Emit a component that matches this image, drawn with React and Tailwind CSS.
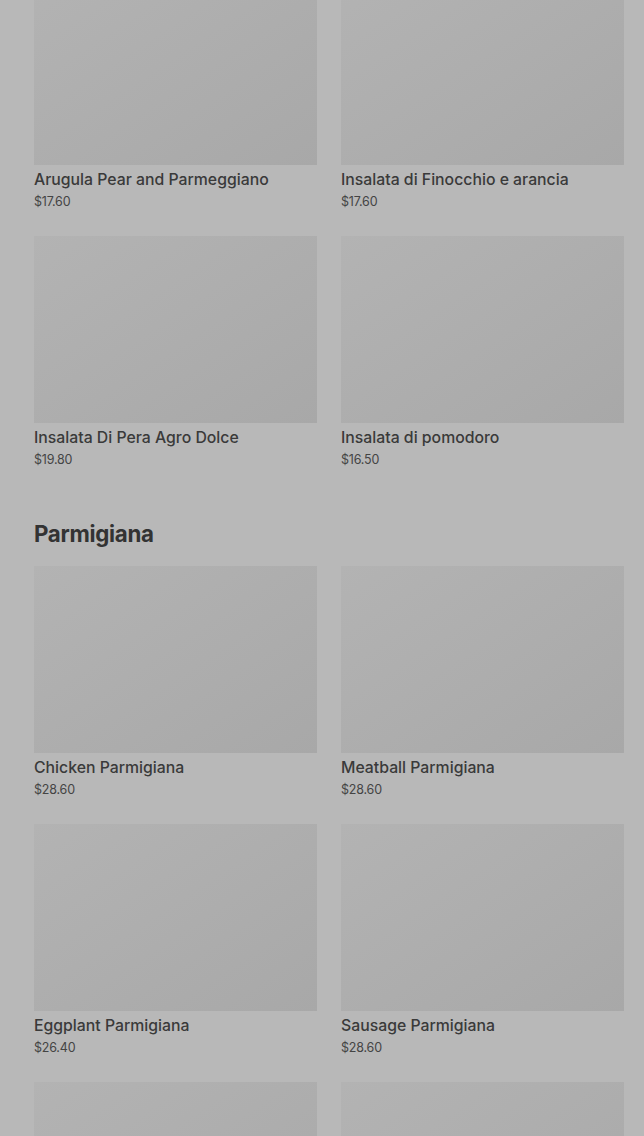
import React from "react";

const sections = [
  {
    title: null,
    items: [
      { name: "Arugula Pear and Parmeggiano", price: "$17.60" },
      { name: "Insalata di Finocchio e arancia", price: "$17.60" },
      { name: "Insalata Di Pera Agro Dolce", price: "$19.80" },
      { name: "Insalata di pomodoro", price: "$16.50" },
    ],
  },
  {
    title: "Parmigiana",
    items: [
      { name: "Chicken Parmigiana", price: "$28.60" },
      { name: "Meatball Parmigiana", price: "$28.60" },
      { name: "Eggplant Parmigiana", price: "$26.40" },
      { name: "Sausage Parmigiana", price: "$28.60" },
      // next row is only peeking in at the bottom
      { name: null, price: null },
      { name: null, price: null },
    ],
  },
];

function MenuCard({ item }) {
  return (
    <div className="flex flex-col">
      <div className="h-[187px] w-full bg-gradient-to-br from-[#b3b3b3] to-[#a8a8a8]" />
      {item.name && (
        <>
          <p className="mt-1 text-[15.8px] leading-[22px] font-medium text-[#3a3a3a]">{item.name}</p>
          <p className="mt-[2px] text-[12.5px] leading-[18px] tracking-[-0.2px] text-[#444444]">{item.price}</p>
        </>
      )}
    </div>
  );
}

export default function App() {
  return (
    <div
      className="h-[1136px] overflow-hidden bg-[#b8b8b8]"
      style={{ fontFamily: "Inter, 'Liberation Sans', sans-serif" }}
    >
      <div className="-mt-[22px] pl-[34px] pr-[20px]">
        {sections.map((section, i) => (
          <section key={i} className={i > 0 ? "mt-[51px]" : ""}>
            {section.title && (
              <h2 className="mb-[18px] text-[22.3px] leading-[28px] font-bold tracking-[-0.3px] text-[#333333]">
                {section.title}
              </h2>
            )}
            <div className="grid grid-cols-2 gap-x-6 gap-y-[25px]">
              {section.items.map((item, j) => (
                <MenuCard key={j} item={item} />
              ))}
            </div>
          </section>
        ))}
      </div>
    </div>
  );
}
